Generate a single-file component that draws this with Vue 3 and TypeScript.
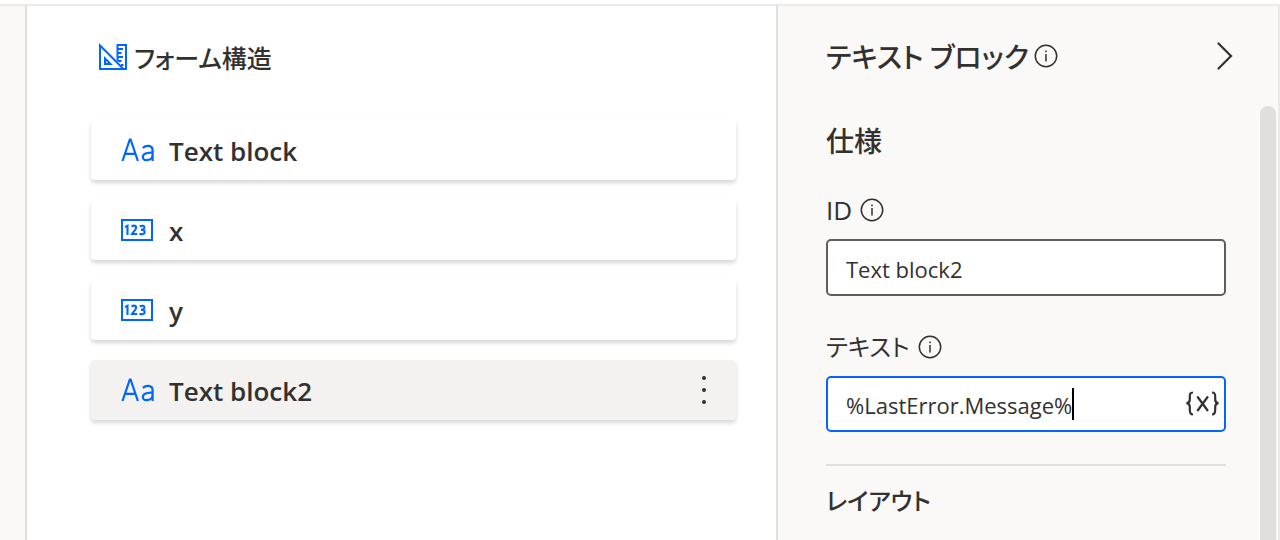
<script setup lang="ts">
import { ref } from 'vue'

interface FormItem {
  id: number
  kind: 'text' | 'number'
  label: string
}

const items: FormItem[] = [
  { id: 1, kind: 'text', label: 'Text block' },
  { id: 2, kind: 'number', label: 'x' },
  { id: 3, kind: 'number', label: 'y' },
  { id: 4, kind: 'text', label: 'Text block2' },
]

const selected = ref(4)
const blockId = ref('Text block2')
const blockText = ref('%LastError.Message%')
</script>

<template>
  <div class="designer">
    <aside class="rail"></aside>

    <main class="structure">
      <h2 class="structure-title">
        <svg class="ruler" width="30" height="28" viewBox="0 0 30 28" fill="none" stroke="#0066ff" stroke-width="2" aria-hidden="true">
          <path d="M2 2.5V26H25.5Z" />
          <path d="M7 15.5V21H12.5Z" />
          <path d="M19.5 18V2H28V26H24" />
          <path d="M20 6H25M20 10H23.5M20 14H25M20 18H23.5M23 22H25.5" stroke-width="2" />
        </svg>
        <span>フォーム構造</span>
      </h2>

      <ul class="cards">
        <li v-for="item in items" :key="item.id" class="card" :class="{ selected: item.id === selected }">
          <button type="button" class="card-main" @click="selected = item.id">
            <svg v-if="item.kind === 'text'" width="34" height="26" viewBox="0 0 34 26" fill="none" stroke="#0066ff" stroke-width="2.2" aria-hidden="true">
              <path d="M1.5 24L8.8 2.5H9.6L16.9 24M4.2 16.8H14.3" />
              <path d="M21.8 10.8C25.5 7.7 31.6 8.1 31.6 13.2V24M31.6 15.3L26.7 16C20.3 16.9 20.5 23.2 25.5 23.2C29.3 23.2 31.6 20.5 31.6 17.5" />
            </svg>
            <svg v-else width="34" height="26" viewBox="0 0 34 26" fill="none" stroke="#0066ff" stroke-width="2" aria-hidden="true">
              <path d="M1 3H31V23H1Z" />
              <g stroke-width="2.1">
                <path d="M4 10.2L6.5 8.8V18" />
                <path d="M10.5 9.6C13 7.9 15.5 8.6 15 11.2C14.7 13 12.2 15 11 17H16.2" />
                <path d="M18.7 9.2C21 8.2 23.6 8.7 23.4 10.7C23.2 12.2 22 12.8 20 12.8C22.3 12.8 23.8 13.5 23.7 15.1C23.6 17.3 20.8 17.6 18.5 16.7" />
              </g>
            </svg>
            <span>{{ item.label }}</span>
          </button>
          <button v-if="item.id === selected" type="button" class="more" aria-label="その他の操作">
            <svg width="6" height="28" viewBox="0 0 6 28" fill="#323130" aria-hidden="true">
              <circle cx="3" cy="2" r="2" />
              <circle cx="3" cy="14" r="2" />
              <circle cx="3" cy="26" r="2" />
            </svg>
          </button>
        </li>
      </ul>
    </main>

    <section class="panel">
      <div class="panel-body">
        <header class="panel-head">
          <h2>テキスト ブロック</h2>
          <svg class="info" width="24" height="24" viewBox="0 0 24 24" fill="none" stroke="#323130" aria-hidden="true">
            <circle cx="12" cy="12" r="10.7" stroke-width="1.5" />
            <path d="M12 10V17.5M12 6.5V8.2" stroke-width="1.5" />
          </svg>
          <button type="button" class="collapse" aria-label="折りたたむ">
            <svg width="18" height="30" viewBox="0 0 18 30" fill="none" stroke="#323130" stroke-width="2.2" stroke-linecap="round" aria-hidden="true">
              <path d="M2.5 2.5L15 15L2.5 27.5" />
            </svg>
          </button>
        </header>

        <h3 class="spec">仕様</h3>

        <div class="label-row latin">
          <label for="block-id">ID</label>
          <svg class="info" width="24" height="24" viewBox="0 0 24 24" fill="none" stroke="#323130" aria-hidden="true">
            <circle cx="12" cy="12" r="10.7" stroke-width="1.5" />
            <path d="M12 10V17.5M12 6.5V8.2" stroke-width="1.5" />
          </svg>
        </div>
        <div class="field">
          <input id="block-id" v-model="blockId" class="grow" type="text" />
        </div>

        <div class="label-row second">
          <label for="block-text">テキスト</label>
          <svg class="info" width="24" height="24" viewBox="0 0 24 24" fill="none" stroke="#323130" aria-hidden="true">
            <circle cx="12" cy="12" r="10.7" stroke-width="1.5" />
            <path d="M12 10V17.5M12 6.5V8.2" stroke-width="1.5" />
          </svg>
        </div>
        <div class="field active">
          <input id="block-text" v-model="blockText" class="fit" type="text" />
          <span class="caret"></span>
          <button type="button" class="variable" aria-label="変数の選択">
            <svg width="34" height="28" viewBox="0 0 34 28" fill="none" stroke="#323130" stroke-width="2.2" aria-hidden="true">
              <path d="M7 2.5C4.1 2.5 3.8 4 3.8 6.5V9.5C3.8 12 3 13 .5 13.2C3 13.5 3.8 14.5 3.8 17V20C3.8 22.5 4.1 24.5 7 24.5" />
              <path d="M11.3 6.5L22 21M22 6.5L11.3 21" />
              <path d="M26 2.5C28.9 2.5 29.2 4 29.2 6.5V9.5C29.2 12 30 13 32.5 13.2C30 13.5 29.2 14.5 29.2 17V20C29.2 22.5 28.9 24.5 26 24.5" />
            </svg>
          </button>
        </div>

        <hr />
        <h3 class="layout">レイアウト</h3>
      </div>
      <div class="scroll"><div class="thumb"></div></div>
    </section>
  </div>
</template>

<style>
body {
  margin: 0;
  background: #fff;
}
</style>

<style scoped>
.designer {
  box-sizing: border-box;
  display: grid;
  grid-template-columns: 25px 1fr 504px;
  height: 100vh;
  margin: 0;
  padding-top: 4px;
  overflow: hidden;
  color: #323130;
  font-family: "Open Sans", "Noto Sans CJK JP", sans-serif;
  font-feature-settings: "palt";
}
.rail,
.structure,
.panel {
  border-top: 2px solid #eaeaea;
}
.rail {
  background: #faf9f8;
}
.structure {
  border-left: 2px solid #e1dfdd;
  padding: 33px 40px 0 64px;
  background: #fff;
}
h2,
h3 {
  margin: 0;
  font-weight: 500;
  font-family: "Noto Sans CJK JP", sans-serif;
}
.structure-title {
  display: flex;
  align-items: center;
  gap: 6px;
  height: 36px;
  margin-left: 7px;
  font-size: 25px;
  line-height: 36px;
}
.cards {
  display: grid;
  gap: 20px;
  margin: 45px 0 0;
  padding: 0;
  list-style: none;
}
.card {
  display: flex;
  align-items: center;
  height: 60px;
  border-radius: 4px;
  background: #fff;
  box-shadow: 0 3px 4px rgba(0, 0, 0, 0.16);
}
.card.selected {
  background: #f3f2f1;
}
button {
  display: flex;
  align-items: center;
  border: 0;
  padding: 0;
  background: none;
  color: inherit;
  font: inherit;
}
.card-main {
  flex: 1;
  gap: 14px;
  height: 60px;
  padding-left: 30px;
  font-size: 26px;
  font-weight: 600;
  line-height: 36px;
}
.card-main span {
  padding-top: 2px;
}
.more {
  justify-content: center;
  width: 26px;
  height: 60px;
  margin-right: 19px;
}
.panel {
  display: flex;
  border-left: 2px solid #e1dfdd;
  border-right: 2px solid #eaeaea;
  background: #faf9f8;
}
.panel-body {
  flex: 1;
  padding: 30px 34px 0 48px;
}
.panel-head {
  display: flex;
  align-items: center;
  gap: 5px;
  height: 40px;
}
.panel-head h2 {
  font-size: 28px;
  line-height: 40px;
}
.collapse {
  margin-left: auto;
  margin-right: -8px;
}
.spec {
  margin-top: 44px;
  font-size: 28px;
  line-height: 40px;
}
.label-row {
  display: flex;
  align-items: center;
  gap: 8px;
  height: 36px;
  font-size: 24px;
  line-height: 36px;
}
.label-row.latin {
  margin-top: 32px;
  font-size: 26px;
}
.label-row.second {
  margin-top: 33px;
}
.field {
  box-sizing: border-box;
  display: flex;
  align-items: center;
  height: 57px;
  margin-top: 11px;
  border: 2px solid #605e5c;
  border-radius: 5px;
  padding: 0 4px 0 18px;
  background: #fff;
}
.field.active {
  height: 56px;
  border-color: #0066ff;
}
input {
  min-width: 0;
  border: 0;
  padding: 2px 0 0;
  outline: 0;
  background: none;
  color: inherit;
  font: 22px/36px "Open Sans", "Noto Sans CJK JP", sans-serif;
}
.grow {
  flex: 1;
}
.fit {
  field-sizing: content;
}
.caret {
  width: 2px;
  height: 32px;
  background: #000;
}
.variable {
  margin-left: auto;
}
hr {
  height: 2px;
  margin: 32px 0 0;
  border: 0;
  background: #e1dfdd;
}
.layout {
  margin-top: 14px;
  font-size: 24px;
  line-height: 40px;
}
.scroll {
  display: flex;
  width: 18px;
  padding-top: 100px;
}
.thumb {
  width: 16px;
  border-radius: 8px 8px 0 0;
  background: #e1dfdd;
}
</style>
